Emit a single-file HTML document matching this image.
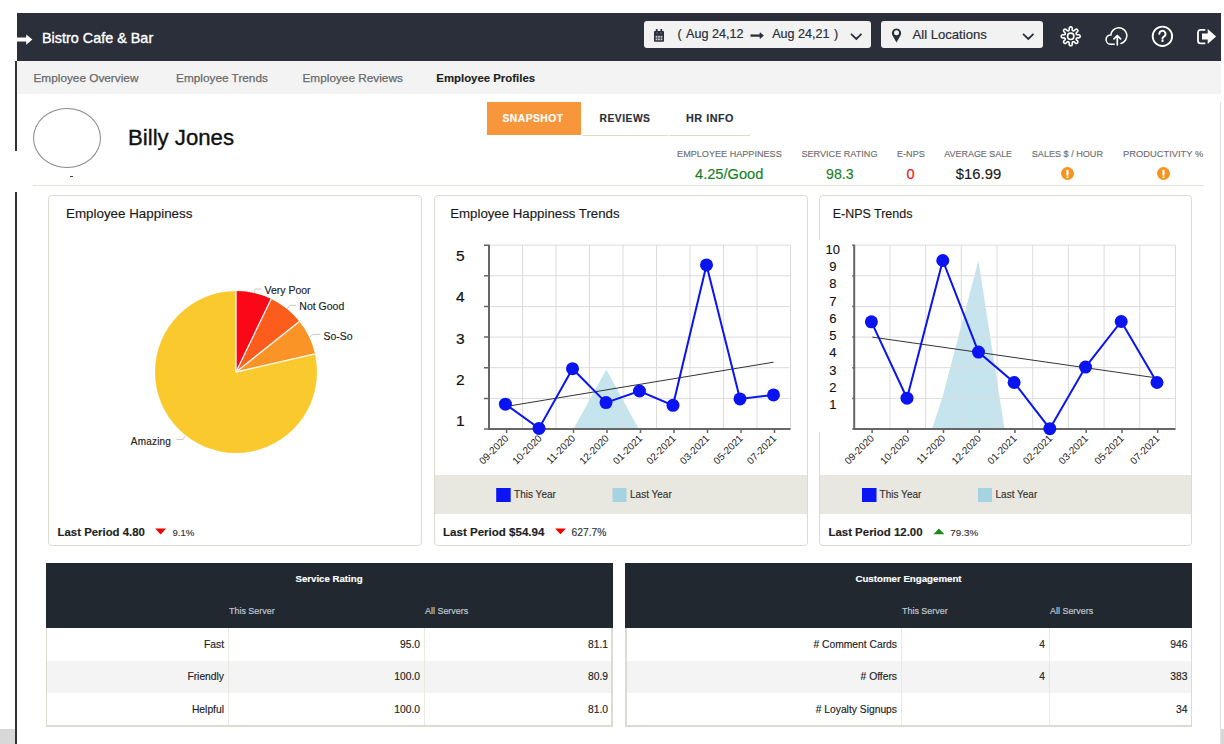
<!DOCTYPE html>
<html><head><meta charset="utf-8"><style>
html,body{margin:0;padding:0;background:#fff;width:1224px;height:744px;overflow:hidden;position:relative;}
.t{position:absolute;white-space:nowrap;line-height:1;-webkit-text-stroke:0.15px currentColor;}
</style></head><body>
<div style="position:absolute;left:17px;top:13px;width:1204px;height:48px;background:#2a2f39;"></div>
<svg style="position:absolute;left:0;top:0" width="40" height="60"><path d="M17 37.6H26.2V34.4L32.4 39.6L26.2 44.8V41.6H17Z" fill="#fff"/></svg>
<div class="t" style="top:30.81px;font-size:14.4px;font-weight:normal;color:#fff;font-family:'Liberation Sans', sans-serif;left:42px;-webkit-text-stroke:0.35px #fff;">Bistro Cafe &amp; Bar</div>
<div style="position:absolute;left:644px;top:21px;width:227px;height:27px;background:#f2f2f2;border-radius:3px;"></div>
<div style="position:absolute;left:881px;top:21px;width:162px;height:27px;background:#f2f2f2;border-radius:3px;"></div>
<svg style="position:absolute;left:0;top:0" width="1224" height="60"><rect x="654" y="31" width="10" height="10.8" rx="0.8" fill="#2a2f39"/><rect x="655.8" y="29" width="1.8" height="3.5" fill="#2a2f39"/><rect x="660.4" y="29" width="1.8" height="3.5" fill="#2a2f39"/><rect x="656.6" y="32.2" width="0.8" height="1.6" fill="#8a8f99"/><rect x="660.6" y="32.2" width="0.8" height="1.6" fill="#8a8f99"/><g fill="#c8cacc"><rect x="655.6" y="35.8" width="1.8" height="1.9"/><rect x="658.1" y="35.8" width="1.8" height="1.9"/><rect x="660.6" y="35.8" width="1.8" height="1.9"/><rect x="655.6" y="38.4" width="1.8" height="1.9"/><rect x="658.1" y="38.4" width="1.8" height="1.9"/><rect x="660.6" y="38.4" width="1.8" height="1.9"/></g><path d="M750.5 35.6h10.5" stroke="#2a2f39" stroke-width="2.3"/><path d="M760 32.8l3.4 2.8-3.4 2.8z" fill="#2a2f39" stroke="#2a2f39" stroke-width="0.8" stroke-linejoin="round"/><path d="M851 33.9l5.3 5.1 5.2-5.1M1023 33.9l5.3 5.1 5.2-5.1" fill="none" stroke="#2a2f39" stroke-width="1.8"/><path d="M896.5 42.5L892.4 35.2A4.6 4.6 0 1 1 900.6 35.2Z" fill="#2a2f39"/><circle cx="896.5" cy="32.8" r="2.5" fill="#f2f2f2"/></svg>
<div class="t" style="top:28.33px;font-size:12.6px;font-weight:normal;color:#2a2f39;font-family:'Liberation Sans', sans-serif;left:677.6px;-webkit-text-stroke:0.2px #2a2f39;">(</div>
<div class="t" style="top:28.33px;font-size:12.6px;font-weight:normal;color:#2a2f39;font-family:'Liberation Sans', sans-serif;left:686px;-webkit-text-stroke:0.2px #2a2f39;">Aug 24,12</div>
<div class="t" style="top:28.33px;font-size:12.6px;font-weight:normal;color:#2a2f39;font-family:'Liberation Sans', sans-serif;left:772.2px;-webkit-text-stroke:0.2px #2a2f39;">Aug 24,21</div>
<div class="t" style="top:28.33px;font-size:12.6px;font-weight:normal;color:#2a2f39;font-family:'Liberation Sans', sans-serif;left:834px;-webkit-text-stroke:0.2px #2a2f39;">)</div>
<div class="t" style="top:28.01px;font-size:13.1px;font-weight:normal;color:#2a2f39;font-family:'Liberation Sans', sans-serif;left:912.5px;-webkit-text-stroke:0.2px #2a2f39;">All Locations</div>
<svg style="position:absolute;left:0;top:0" width="1224" height="70"><path d="M1070.70 26.85 L1071.00 26.88 L1071.29 26.96 L1071.57 27.10 L1071.84 27.31 L1072.08 27.61 L1072.25 28.17 L1072.18 29.66 L1072.31 30.05 L1072.44 30.31 L1072.58 30.51 L1072.73 30.65 L1072.89 30.76 L1073.07 30.83 L1073.25 30.87 L1073.47 30.87 L1073.71 30.83 L1073.99 30.74 L1074.35 30.55 L1075.35 29.45 L1075.87 29.19 L1076.26 29.14 L1076.59 29.18 L1076.89 29.28 L1077.15 29.43 L1077.38 29.62 L1077.57 29.85 L1077.72 30.11 L1077.82 30.41 L1077.86 30.74 L1077.81 31.13 L1077.55 31.65 L1076.45 32.65 L1076.26 33.01 L1076.17 33.29 L1076.13 33.53 L1076.13 33.75 L1076.17 33.93 L1076.24 34.11 L1076.35 34.27 L1076.49 34.42 L1076.69 34.56 L1076.95 34.69 L1077.34 34.82 L1078.83 34.75 L1079.39 34.92 L1079.69 35.16 L1079.90 35.43 L1080.04 35.71 L1080.12 36.00 L1080.15 36.30 L1080.12 36.60 L1080.04 36.89 L1079.90 37.17 L1079.69 37.44 L1079.39 37.68 L1078.83 37.85 L1077.34 37.78 L1076.95 37.91 L1076.69 38.04 L1076.49 38.18 L1076.35 38.33 L1076.24 38.49 L1076.17 38.67 L1076.13 38.85 L1076.13 39.07 L1076.17 39.31 L1076.26 39.59 L1076.45 39.95 L1077.55 40.95 L1077.81 41.47 L1077.86 41.86 L1077.82 42.19 L1077.72 42.49 L1077.57 42.75 L1077.38 42.98 L1077.15 43.17 L1076.89 43.32 L1076.59 43.42 L1076.26 43.46 L1075.87 43.41 L1075.35 43.15 L1074.35 42.05 L1073.99 41.86 L1073.71 41.77 L1073.47 41.73 L1073.25 41.73 L1073.07 41.77 L1072.89 41.84 L1072.73 41.95 L1072.58 42.09 L1072.44 42.29 L1072.31 42.55 L1072.18 42.94 L1072.25 44.43 L1072.08 44.99 L1071.84 45.29 L1071.57 45.50 L1071.29 45.64 L1071.00 45.72 L1070.70 45.75 L1070.40 45.72 L1070.11 45.64 L1069.83 45.50 L1069.56 45.29 L1069.32 44.99 L1069.15 44.43 L1069.22 42.94 L1069.09 42.55 L1068.96 42.29 L1068.82 42.09 L1068.67 41.95 L1068.51 41.84 L1068.33 41.77 L1068.15 41.73 L1067.93 41.73 L1067.69 41.77 L1067.41 41.86 L1067.05 42.05 L1066.05 43.15 L1065.53 43.41 L1065.14 43.46 L1064.81 43.42 L1064.51 43.32 L1064.25 43.17 L1064.02 42.98 L1063.83 42.75 L1063.68 42.49 L1063.58 42.19 L1063.54 41.86 L1063.59 41.47 L1063.85 40.95 L1064.95 39.95 L1065.14 39.59 L1065.23 39.31 L1065.27 39.07 L1065.27 38.85 L1065.23 38.67 L1065.16 38.49 L1065.05 38.33 L1064.91 38.18 L1064.71 38.04 L1064.45 37.91 L1064.06 37.78 L1062.57 37.85 L1062.01 37.68 L1061.71 37.44 L1061.50 37.17 L1061.36 36.89 L1061.28 36.60 L1061.25 36.30 L1061.28 36.00 L1061.36 35.71 L1061.50 35.43 L1061.71 35.16 L1062.01 34.92 L1062.57 34.75 L1064.06 34.82 L1064.45 34.69 L1064.71 34.56 L1064.91 34.42 L1065.05 34.27 L1065.16 34.11 L1065.23 33.93 L1065.27 33.75 L1065.27 33.53 L1065.23 33.29 L1065.14 33.01 L1064.95 32.65 L1063.85 31.65 L1063.59 31.13 L1063.54 30.74 L1063.58 30.41 L1063.68 30.11 L1063.83 29.85 L1064.02 29.62 L1064.25 29.43 L1064.51 29.28 L1064.81 29.18 L1065.14 29.14 L1065.53 29.19 L1066.05 29.45 L1067.05 30.55 L1067.41 30.74 L1067.69 30.83 L1067.93 30.87 L1068.15 30.87 L1068.33 30.83 L1068.51 30.76 L1068.67 30.65 L1068.82 30.51 L1068.96 30.31 L1069.09 30.05 L1069.22 29.66 L1069.15 28.17 L1069.32 27.61 L1069.56 27.31 L1069.83 27.10 L1070.11 26.96 L1070.40 26.88Z" fill="none" stroke="#fff" stroke-width="1.6" stroke-linejoin="round"/><circle cx="1070.7" cy="36.3" r="3.2" fill="none" stroke="#fff" stroke-width="1.6"/><path d="M1114.2 44.2H1110.5A4.6 4.6 0 0 1 1110.9 35A8 8 0 1 1 1121 43.4" fill="none" stroke="#fff" stroke-width="1.6" stroke-linecap="round"/><path d="M1117.3 44.8V35.8M1114 38.9L1117.3 35.5L1120.6 38.9" fill="none" stroke="#fff" stroke-width="1.7" stroke-linecap="round" stroke-linejoin="round"/><circle cx="1162.4" cy="36.3" r="9.7" fill="none" stroke="#fff" stroke-width="1.9"/><path d="M1159.3 33.9A3.1 3.1 0 1 1 1163.9 36.6C1163 37.1 1162.5 37.6 1162.5 38.6V38.9" fill="none" stroke="#fff" stroke-width="1.9" stroke-linecap="round"/><rect x="1161.5" y="40" width="2" height="1.9" fill="#fff"/><path d="M1205.3 29.8H1200.6A2.6 2.6 0 0 0 1198 32.4V40.8A2.6 2.6 0 0 0 1200.6 43.4H1205.3" fill="none" stroke="#fff" stroke-width="1.8"/><path d="M1202 33.5H1207.7V29.1L1216.1 36.6L1207.7 44.1V39.6H1202Z" fill="#fff"/></svg>
<div style="position:absolute;left:17px;top:61px;width:1204px;height:33px;background:#f3f3f3;"></div>
<div class="t" style="top:72.51px;font-size:11.8px;font-weight:normal;color:#6a6a6a;font-family:'Liberation Sans', sans-serif;left:33.5px;-webkit-text-stroke:0.25px #6a6a6a;">Employee Overview</div>
<div class="t" style="top:72.51px;font-size:11.8px;font-weight:normal;color:#6a6a6a;font-family:'Liberation Sans', sans-serif;left:176.1px;-webkit-text-stroke:0.25px #6a6a6a;">Employee Trends</div>
<div class="t" style="top:72.51px;font-size:11.8px;font-weight:normal;color:#6a6a6a;font-family:'Liberation Sans', sans-serif;left:302.5px;-webkit-text-stroke:0.25px #6a6a6a;">Employee Reviews</div>
<div class="t" style="top:72.85px;font-size:11.4px;font-weight:bold;color:#1e1e1e;font-family:'Liberation Sans', sans-serif;left:436.3px;">Employee Profiles</div>
<div style="position:absolute;left:15px;top:61px;width:2px;height:90px;background:#333;"></div>
<div style="position:absolute;left:15px;top:192px;width:2px;height:552px;background:#333;"></div>
<div style="position:absolute;left:1220px;top:102px;width:1px;height:642px;background:#e2e2e2;"></div>
<div style="position:absolute;left:0px;top:729px;width:15px;height:15px;background:#d8d8d8;"></div>
<div style="position:absolute;left:1221px;top:729px;width:3px;height:15px;background:#d8d8d8;"></div>
<div style="position:absolute;left:33px;top:108px;width:66px;height:58px;border:1px solid #8a8a8a;border-radius:50%;"></div>
<div style="position:absolute;left:70px;top:176px;width:3px;height:1px;background:#444;"></div>
<div class="t" style="top:127.21px;font-size:22.2px;font-weight:normal;color:#111;font-family:'Liberation Sans', sans-serif;left:128px;-webkit-text-stroke:0.35px #111;">Billy Jones</div>
<div style="position:absolute;left:487px;top:102px;width:94px;height:33px;background:#f7963a;"></div>
<div class="t" style="top:113.68px;font-size:10.3px;font-weight:bold;color:#fff;font-family:'Liberation Sans', sans-serif;left:233px;width:600px;text-align:center;letter-spacing:0.5px;">SNAPSHOT</div>
<div class="t" style="top:113.68px;font-size:10.3px;font-weight:bold;color:#2a2f38;font-family:'Liberation Sans', sans-serif;left:325px;width:600px;text-align:center;letter-spacing:0.5px;">REVIEWS</div>
<div class="t" style="top:113.26px;font-size:10.8px;font-weight:bold;color:#2a2f38;font-family:'Liberation Sans', sans-serif;left:410px;width:600px;text-align:center;letter-spacing:0.5px;">HR INFO</div>
<div style="position:absolute;left:583px;top:135px;width:85px;height:1px;background:#dcdcd2;"></div>
<div style="position:absolute;left:669px;top:135px;width:81px;height:1px;background:#dcdcd2;"></div>
<div class="t" style="top:149.89px;font-size:9.11px;font-weight:normal;color:#6f6f6f;font-family:'Liberation Sans', sans-serif;left:429.4px;width:600px;text-align:center;">EMPLOYEE HAPPINESS</div>
<div class="t" style="top:149.88px;font-size:9.12px;font-weight:normal;color:#6f6f6f;font-family:'Liberation Sans', sans-serif;left:539.5px;width:600px;text-align:center;">SERVICE RATING</div>
<div class="t" style="top:149.93px;font-size:9.06px;font-weight:normal;color:#6f6f6f;font-family:'Liberation Sans', sans-serif;left:610.9px;width:600px;text-align:center;">E-NPS</div>
<div class="t" style="top:150.03px;font-size:8.94px;font-weight:normal;color:#6f6f6f;font-family:'Liberation Sans', sans-serif;left:678.2px;width:600px;text-align:center;">AVERAGE SALE</div>
<div class="t" style="top:149.91px;font-size:9.09px;font-weight:normal;color:#6f6f6f;font-family:'Liberation Sans', sans-serif;left:767.4000000000001px;width:600px;text-align:center;">SALES $ / HOUR</div>
<div class="t" style="top:149.69px;font-size:9.34px;font-weight:normal;color:#6f6f6f;font-family:'Liberation Sans', sans-serif;left:863.2px;width:600px;text-align:center;">PRODUCTIVITY %</div>
<div class="t" style="top:166.80px;font-size:14.65px;font-weight:normal;color:#17801f;font-family:'Liberation Sans', sans-serif;left:429.20000000000005px;width:600px;text-align:center;">4.25/Good</div>
<div class="t" style="top:167.20px;font-size:14.18px;font-weight:normal;color:#17801f;font-family:'Liberation Sans', sans-serif;left:539.8px;width:600px;text-align:center;">98.3</div>
<div class="t" style="top:166.93px;font-size:14.5px;font-weight:normal;color:#ee1111;font-family:'Liberation Sans', sans-serif;left:610.5px;width:600px;text-align:center;">0</div>
<div class="t" style="top:166.66px;font-size:14.81px;font-weight:normal;color:#1a1a1a;font-family:'Liberation Sans', sans-serif;left:678.5px;width:600px;text-align:center;">$16.99</div>
<svg style="position:absolute;left:1060.0px;top:166.2px" width="15" height="15" viewBox="0 0 15 15"><circle cx="7.5" cy="7.5" r="6.5" fill="#f7941d"/><rect x="6.4" y="3.8" width="2.2" height="6" rx="0.8" fill="#fff"/><rect x="6.5" y="10.6" width="2" height="1.4" fill="#fff"/></svg>
<svg style="position:absolute;left:1155.5px;top:166.2px" width="15" height="15" viewBox="0 0 15 15"><circle cx="7.5" cy="7.5" r="6.5" fill="#f7941d"/><rect x="6.4" y="3.8" width="2.2" height="6" rx="0.8" fill="#fff"/><rect x="6.5" y="10.6" width="2" height="1.4" fill="#fff"/></svg>
<div style="position:absolute;left:33px;top:184.5px;width:1171px;height:1px;background:#e4e4dc;"></div>
<div style="position:absolute;left:48px;top:195px;width:372px;height:349px;border:1px solid #dcdbd0;border-radius:4px;background:#fff;"></div>
<div style="position:absolute;left:434px;top:195px;width:372px;height:349px;border:1px solid #dcdbd0;border-radius:4px;background:#fff;"></div>
<div style="position:absolute;left:819px;top:195px;width:371px;height:349px;border:1px solid #dcdbd0;border-radius:4px;background:#fff;"></div>
<div class="t" style="top:206.97px;font-size:13.38px;font-weight:normal;color:#1a1a1a;font-family:'Liberation Sans', sans-serif;left:66px;">Employee Happiness</div>
<div class="t" style="top:207.08px;font-size:13.26px;font-weight:normal;color:#1a1a1a;font-family:'Liberation Sans', sans-serif;left:450.2px;">Employee Happiness Trends</div>
<div class="t" style="top:207.74px;font-size:12.47px;font-weight:normal;color:#1a1a1a;font-family:'Liberation Sans', sans-serif;left:832.7px;">E-NPS Trends</div>
<div style="position:absolute;left:435px;top:475px;width:372px;height:38.5px;background:#e8e7e0;"></div>
<div style="position:absolute;left:820px;top:475px;width:371px;height:38.5px;background:#e8e7e0;"></div>
<div class="t" style="top:526.67px;font-size:11.38px;font-weight:bold;color:#222;font-family:'Liberation Sans', sans-serif;left:57.6px;">Last Period 4.80</div>
<div class="t" style="top:528.13px;font-size:9.65px;font-weight:normal;color:#333;font-family:'Liberation Sans', sans-serif;left:172.4px;">9.1%</div>
<div class="t" style="top:526.51px;font-size:11.56px;font-weight:bold;color:#222;font-family:'Liberation Sans', sans-serif;left:443px;">Last Period $54.94</div>
<div class="t" style="top:527.61px;font-size:10.26px;font-weight:normal;color:#333;font-family:'Liberation Sans', sans-serif;left:571.6px;">627.7%</div>
<div class="t" style="top:526.60px;font-size:11.46px;font-weight:bold;color:#222;font-family:'Liberation Sans', sans-serif;left:828.4px;">Last Period 12.00</div>
<div class="t" style="top:527.95px;font-size:9.87px;font-weight:normal;color:#333;font-family:'Liberation Sans', sans-serif;left:950.3px;">79.3%</div>
<div style="position:absolute;left:814px;top:240px;width:38px;height:192px;background:#fff;"></div>
<svg style="position:absolute;left:0;top:0" width="1224" height="744"><path d="M155.2 528.6h10.9l-5.45 5.8z" fill="#ee0000"/><path d="M555.1 528.4h10.8l-5.4 5.9z" fill="#ee0000"/><path d="M933.5 534.3h10.8l-5.4-5.9z" fill="#1a8a1a"/><circle cx="236" cy="372" r="81" fill="#f9c92e"/><path d="M236 372L236.00 291.00A81 81 0 0 1 271.14 299.02Z" fill="#fb0717"/><path d="M236 372L271.14 299.02A81 81 0 0 1 299.33 321.50Z" fill="#fc5c1c"/><path d="M236 372L299.33 321.50A81 81 0 0 1 314.97 353.98Z" fill="#fb9426"/><path d="M236 372L236.00 291.00" stroke="#fff" stroke-width="1.3"/><path d="M236 372L271.14 299.02" stroke="#fff" stroke-width="1.3"/><path d="M236 372L299.33 321.50" stroke="#fff" stroke-width="1.3"/><path d="M236 372L314.97 353.98" stroke="#fff" stroke-width="1.3"/><path d="M254.2 292.5L255.2 289H261.5M286.9 309L290 305.3H296M309.6 337.3L313 334.4H320.4M185 436.3L183.1 439.4H176.5" fill="none" stroke="#c8c8c8" stroke-width="1"/><rect x="489" y="245.2" width="301.5" height="183.8" fill="#fff"/><path d="M573.5 429L606.3 369.4L638.8 429Z" fill="#add8e6" fill-opacity="0.7"/><path d="M522.5 245.2V429.0 M556.0 245.2V429.0 M589.5 245.2V429.0 M623.0 245.2V429.0 M656.5 245.2V429.0 M690.0 245.2V429.0 M723.5 245.2V429.0 M757.0 245.2V429.0 M790.5 245.2V429.0 M489 245.2H790.5 M489 275.8H790.5 M489 306.5H790.5 M489 337.1H790.5 M489 367.7H790.5 M489 398.4H790.5" stroke="#dcdcdc" stroke-width="1" fill="none"/><path d="M489 244.7V429.0H790.5" stroke="#666" stroke-width="2" fill="none"/><path d="M484 245.2H489 M484 275.8H489 M484 306.5H489 M484 337.1H489 M484 367.7H489 M484 398.4H489 M484 429.0H489 M506.6 429.0V433.0 M540.0 429.0V433.0 M573.5 429.0V433.0 M607.0 429.0V433.0 M640.5 429.0V433.0 M674.0 429.0V433.0 M707.5 429.0V433.0 M741.0 429.0V433.0 M774.5 429.0V433.0" stroke="#666" stroke-width="1.5" fill="none"/><path d="M507.2 406.3L773.6 362.2" stroke="#333" stroke-width="1" fill="none"/><path d="M505.4 404.2 L539.0 428.4 L572.5 368.7 L606.0 402.6 L639.5 391.0 L673.0 405.3 L706.5 264.9 L740.0 398.9 L773.5 394.9" stroke="#0a14f0" stroke-width="2" fill="none"/><circle cx="505.4" cy="404.2" r="6.5" fill="#0a14f0"/><circle cx="539.0" cy="428.4" r="6.5" fill="#0a14f0"/><circle cx="572.5" cy="368.7" r="6.5" fill="#0a14f0"/><circle cx="606.0" cy="402.6" r="6.5" fill="#0a14f0"/><circle cx="639.5" cy="391.0" r="6.5" fill="#0a14f0"/><circle cx="673.0" cy="405.3" r="6.5" fill="#0a14f0"/><circle cx="706.5" cy="264.9" r="6.5" fill="#0a14f0"/><circle cx="740.0" cy="398.9" r="6.5" fill="#0a14f0"/><circle cx="773.5" cy="394.9" r="6.5" fill="#0a14f0"/><text x="0" y="0" transform="translate(509.1 439.0) rotate(-45)" text-anchor="end" font-family="Liberation Sans" font-size="10" fill="#222">09-2020</text><text x="0" y="0" transform="translate(542.5 439.0) rotate(-45)" text-anchor="end" font-family="Liberation Sans" font-size="10" fill="#222">10-2020</text><text x="0" y="0" transform="translate(576.0 439.0) rotate(-45)" text-anchor="end" font-family="Liberation Sans" font-size="10" fill="#222">11-2020</text><text x="0" y="0" transform="translate(609.5 439.0) rotate(-45)" text-anchor="end" font-family="Liberation Sans" font-size="10" fill="#222">12-2020</text><text x="0" y="0" transform="translate(643.0 439.0) rotate(-45)" text-anchor="end" font-family="Liberation Sans" font-size="10" fill="#222">01-2021</text><text x="0" y="0" transform="translate(676.5 439.0) rotate(-45)" text-anchor="end" font-family="Liberation Sans" font-size="10" fill="#222">02-2021</text><text x="0" y="0" transform="translate(710.0 439.0) rotate(-45)" text-anchor="end" font-family="Liberation Sans" font-size="10" fill="#222">03-2021</text><text x="0" y="0" transform="translate(743.5 439.0) rotate(-45)" text-anchor="end" font-family="Liberation Sans" font-size="10" fill="#222">05-2021</text><text x="0" y="0" transform="translate(777.0 439.0) rotate(-45)" text-anchor="end" font-family="Liberation Sans" font-size="10" fill="#222">07-2021</text><rect x="854.2" y="245.2" width="321.29999999999995" height="183.8" fill="#fff"/><path d="M932 429L942.3 397.7L978.4 260.6L1004.5 429Z" fill="#add8e6" fill-opacity="0.7"/><path d="M889.9 245.2V429.0 M925.6 245.2V429.0 M961.3 245.2V429.0 M997.0 245.2V429.0 M1032.7 245.2V429.0 M1068.4 245.2V429.0 M1104.1 245.2V429.0 M1139.8 245.2V429.0 M1175.5 245.2V429.0 M854.2 245.2H1175.5 M854.2 275.8H1175.5 M854.2 306.5H1175.5 M854.2 337.1H1175.5 M854.2 367.7H1175.5 M854.2 398.4H1175.5" stroke="#dcdcdc" stroke-width="1" fill="none"/><path d="M854.2 244.7V429.0H1175.5" stroke="#666" stroke-width="2" fill="none"/><path d="M852.2 245.2H854.2 M852.2 275.8H854.2 M852.2 306.5H854.2 M852.2 337.1H854.2 M852.2 367.7H854.2 M852.2 398.4H854.2 M852.2 429.0H854.2 M872.1 429.0V433.0 M907.8 429.0V433.0 M943.5 429.0V433.0 M979.2 429.0V433.0 M1014.9 429.0V433.0 M1050.5 429.0V433.0 M1086.2 429.0V433.0 M1122.0 429.0V433.0 M1157.7 429.0V433.0" stroke="#666" stroke-width="1.5" fill="none"/><path d="M872.3 337.1L1155 377.7" stroke="#333" stroke-width="1" fill="none"/><path d="M871.4 321.8 L907.0 398.2 L942.8 260.5 L978.5 352.1 L1014.1 382.5 L1049.8 428.7 L1085.5 367.1 L1121.2 321.5 L1157.0 382.5" stroke="#0a14f0" stroke-width="2" fill="none"/><circle cx="871.4" cy="321.8" r="6.5" fill="#0a14f0"/><circle cx="907.0" cy="398.2" r="6.5" fill="#0a14f0"/><circle cx="942.8" cy="260.5" r="6.5" fill="#0a14f0"/><circle cx="978.5" cy="352.1" r="6.5" fill="#0a14f0"/><circle cx="1014.1" cy="382.5" r="6.5" fill="#0a14f0"/><circle cx="1049.8" cy="428.7" r="6.5" fill="#0a14f0"/><circle cx="1085.5" cy="367.1" r="6.5" fill="#0a14f0"/><circle cx="1121.2" cy="321.5" r="6.5" fill="#0a14f0"/><circle cx="1157.0" cy="382.5" r="6.5" fill="#0a14f0"/><text x="0" y="0" transform="translate(874.6 439.0) rotate(-45)" text-anchor="end" font-family="Liberation Sans" font-size="10" fill="#222">09-2020</text><text x="0" y="0" transform="translate(910.2 439.0) rotate(-45)" text-anchor="end" font-family="Liberation Sans" font-size="10" fill="#222">10-2020</text><text x="0" y="0" transform="translate(946.0 439.0) rotate(-45)" text-anchor="end" font-family="Liberation Sans" font-size="10" fill="#222">11-2020</text><text x="0" y="0" transform="translate(981.7 439.0) rotate(-45)" text-anchor="end" font-family="Liberation Sans" font-size="10" fill="#222">12-2020</text><text x="0" y="0" transform="translate(1017.4 439.0) rotate(-45)" text-anchor="end" font-family="Liberation Sans" font-size="10" fill="#222">01-2021</text><text x="0" y="0" transform="translate(1053.0 439.0) rotate(-45)" text-anchor="end" font-family="Liberation Sans" font-size="10" fill="#222">02-2021</text><text x="0" y="0" transform="translate(1088.8 439.0) rotate(-45)" text-anchor="end" font-family="Liberation Sans" font-size="10" fill="#222">03-2021</text><text x="0" y="0" transform="translate(1124.5 439.0) rotate(-45)" text-anchor="end" font-family="Liberation Sans" font-size="10" fill="#222">05-2021</text><text x="0" y="0" transform="translate(1160.2 439.0) rotate(-45)" text-anchor="end" font-family="Liberation Sans" font-size="10" fill="#222">07-2021</text><rect x="496.2" y="488" width="14.5" height="14" fill="#0a14f5"/><rect x="612.5" y="488" width="14" height="14" fill="#a6d3e2"/><rect x="862" y="488" width="14.5" height="14" fill="#0a14f5"/><rect x="978" y="488" width="14" height="14" fill="#a6d3e2"/></svg>
<div class="t" style="top:284.81px;font-size:10.5px;font-weight:normal;color:#222;font-family:'Liberation Sans', sans-serif;left:264.5px;">Very Poor</div>
<div class="t" style="top:301.01px;font-size:10.5px;font-weight:normal;color:#222;font-family:'Liberation Sans', sans-serif;left:299.3px;">Not Good</div>
<div class="t" style="top:330.91px;font-size:10.5px;font-weight:normal;color:#222;font-family:'Liberation Sans', sans-serif;left:323.5px;">So-So</div>
<div class="t" style="top:436.54px;font-size:10px;font-weight:normal;color:#222;font-family:'Liberation Sans', sans-serif;left:130.8px;letter-spacing:0.2px;">Amazing</div>
<div class="t" style="top:248.18px;font-size:15.5px;font-weight:normal;color:#111;font-family:'Liberation Sans', sans-serif;left:160.2px;width:600px;text-align:center;-webkit-text-stroke:0.2px #111;">5</div>
<div class="t" style="top:289.38px;font-size:15.5px;font-weight:normal;color:#111;font-family:'Liberation Sans', sans-serif;left:160.2px;width:600px;text-align:center;-webkit-text-stroke:0.2px #111;">4</div>
<div class="t" style="top:330.58px;font-size:15.5px;font-weight:normal;color:#111;font-family:'Liberation Sans', sans-serif;left:160.2px;width:600px;text-align:center;-webkit-text-stroke:0.2px #111;">3</div>
<div class="t" style="top:371.78px;font-size:15.5px;font-weight:normal;color:#111;font-family:'Liberation Sans', sans-serif;left:160.2px;width:600px;text-align:center;-webkit-text-stroke:0.2px #111;">2</div>
<div class="t" style="top:412.98px;font-size:15.5px;font-weight:normal;color:#111;font-family:'Liberation Sans', sans-serif;left:160.2px;width:600px;text-align:center;-webkit-text-stroke:0.2px #111;">1</div>
<div class="t" style="top:243.00px;font-size:13px;font-weight:normal;color:#111;font-family:'Liberation Sans', sans-serif;left:532.8px;width:600px;text-align:center;-webkit-text-stroke:0.12px #111;">10</div>
<div class="t" style="top:260.22px;font-size:13px;font-weight:normal;color:#111;font-family:'Liberation Sans', sans-serif;left:532.8px;width:600px;text-align:center;-webkit-text-stroke:0.12px #111;">9</div>
<div class="t" style="top:277.44px;font-size:13px;font-weight:normal;color:#111;font-family:'Liberation Sans', sans-serif;left:532.8px;width:600px;text-align:center;-webkit-text-stroke:0.12px #111;">8</div>
<div class="t" style="top:294.66px;font-size:13px;font-weight:normal;color:#111;font-family:'Liberation Sans', sans-serif;left:532.8px;width:600px;text-align:center;-webkit-text-stroke:0.12px #111;">7</div>
<div class="t" style="top:311.88px;font-size:13px;font-weight:normal;color:#111;font-family:'Liberation Sans', sans-serif;left:532.8px;width:600px;text-align:center;-webkit-text-stroke:0.12px #111;">6</div>
<div class="t" style="top:329.10px;font-size:13px;font-weight:normal;color:#111;font-family:'Liberation Sans', sans-serif;left:532.8px;width:600px;text-align:center;-webkit-text-stroke:0.12px #111;">5</div>
<div class="t" style="top:346.32px;font-size:13px;font-weight:normal;color:#111;font-family:'Liberation Sans', sans-serif;left:532.8px;width:600px;text-align:center;-webkit-text-stroke:0.12px #111;">4</div>
<div class="t" style="top:363.54px;font-size:13px;font-weight:normal;color:#111;font-family:'Liberation Sans', sans-serif;left:532.8px;width:600px;text-align:center;-webkit-text-stroke:0.12px #111;">3</div>
<div class="t" style="top:380.76px;font-size:13px;font-weight:normal;color:#111;font-family:'Liberation Sans', sans-serif;left:532.8px;width:600px;text-align:center;-webkit-text-stroke:0.12px #111;">2</div>
<div class="t" style="top:397.98px;font-size:13px;font-weight:normal;color:#111;font-family:'Liberation Sans', sans-serif;left:532.8px;width:600px;text-align:center;-webkit-text-stroke:0.12px #111;">1</div>
<div class="t" style="top:490.31px;font-size:10.03px;font-weight:normal;color:#333;font-family:'Liberation Sans', sans-serif;left:514.1px;">This Year</div>
<div class="t" style="top:490.31px;font-size:10.03px;font-weight:normal;color:#333;font-family:'Liberation Sans', sans-serif;left:630px;">Last Year</div>
<div class="t" style="top:490.31px;font-size:10.03px;font-weight:normal;color:#333;font-family:'Liberation Sans', sans-serif;left:879.6px;">This Year</div>
<div class="t" style="top:490.31px;font-size:10.03px;font-weight:normal;color:#333;font-family:'Liberation Sans', sans-serif;left:995.5px;">Last Year</div>
<div style="position:absolute;left:45.5px;top:562.5px;width:567.0px;height:65.5px;background:#212830;"></div>
<div style="position:absolute;left:45.5px;top:628px;width:1.5px;height:98.5px;background:#dcdbd0;"></div>
<div style="position:absolute;left:611.0px;top:628px;width:1.5px;height:98.5px;background:#dcdbd0;"></div>
<div style="position:absolute;left:45.5px;top:725px;width:567.0px;height:2px;background:#dcdbd0;"></div>
<div style="position:absolute;left:47.0px;top:661px;width:564.0px;height:32px;background:#f4f4f4;"></div>
<div style="position:absolute;left:228px;top:628px;width:1px;height:97px;background:#ebe9e1;"></div>
<div style="position:absolute;left:424px;top:628px;width:1px;height:97px;background:#ebe9e1;"></div>
<div class="t" style="top:573.81px;font-size:9.67px;font-weight:bold;color:#fff;font-family:'Liberation Sans', sans-serif;left:29.0px;width:600px;text-align:center;">Service Rating</div>
<div class="t" style="top:607.02px;font-size:8.95px;font-weight:normal;color:#bfc6cd;font-family:'Liberation Sans', sans-serif;left:229px;-webkit-text-stroke:0.2px #bfc6cd;">This Server</div>
<div class="t" style="top:607.02px;font-size:8.95px;font-weight:normal;color:#bfc6cd;font-family:'Liberation Sans', sans-serif;left:425px;-webkit-text-stroke:0.2px #bfc6cd;">All Servers</div>
<div class="t" style="top:639.58px;font-size:10.3px;font-weight:normal;color:#222;font-family:'Liberation Sans', sans-serif;right:1000px;text-align:right;">Fast</div>
<div class="t" style="top:639.58px;font-size:10.3px;font-weight:normal;color:#222;font-family:'Liberation Sans', sans-serif;right:804px;text-align:right;">95.0</div>
<div class="t" style="top:639.58px;font-size:10.3px;font-weight:normal;color:#222;font-family:'Liberation Sans', sans-serif;right:616.0px;text-align:right;">81.1</div>
<div class="t" style="top:672.18px;font-size:10.3px;font-weight:normal;color:#222;font-family:'Liberation Sans', sans-serif;right:1000px;text-align:right;">Friendly</div>
<div class="t" style="top:672.18px;font-size:10.3px;font-weight:normal;color:#222;font-family:'Liberation Sans', sans-serif;right:804px;text-align:right;">100.0</div>
<div class="t" style="top:672.18px;font-size:10.3px;font-weight:normal;color:#222;font-family:'Liberation Sans', sans-serif;right:616.0px;text-align:right;">80.9</div>
<div class="t" style="top:704.78px;font-size:10.3px;font-weight:normal;color:#222;font-family:'Liberation Sans', sans-serif;right:1000px;text-align:right;">Helpful</div>
<div class="t" style="top:704.78px;font-size:10.3px;font-weight:normal;color:#222;font-family:'Liberation Sans', sans-serif;right:804px;text-align:right;">100.0</div>
<div class="t" style="top:704.78px;font-size:10.3px;font-weight:normal;color:#222;font-family:'Liberation Sans', sans-serif;right:616.0px;text-align:right;">81.0</div>
<div style="position:absolute;left:625px;top:562.5px;width:567px;height:65.5px;background:#212830;"></div>
<div style="position:absolute;left:625px;top:628px;width:1.5px;height:98.5px;background:#dcdbd0;"></div>
<div style="position:absolute;left:1190.5px;top:628px;width:1.5px;height:98.5px;background:#dcdbd0;"></div>
<div style="position:absolute;left:625px;top:725px;width:567px;height:2px;background:#dcdbd0;"></div>
<div style="position:absolute;left:626.5px;top:661px;width:564px;height:32px;background:#f4f4f4;"></div>
<div style="position:absolute;left:901px;top:628px;width:1px;height:97px;background:#ebe9e1;"></div>
<div style="position:absolute;left:1049px;top:628px;width:1px;height:97px;background:#ebe9e1;"></div>
<div class="t" style="top:573.78px;font-size:9.71px;font-weight:bold;color:#fff;font-family:'Liberation Sans', sans-serif;left:608.5px;width:600px;text-align:center;">Customer Engagement</div>
<div class="t" style="top:607.02px;font-size:8.95px;font-weight:normal;color:#bfc6cd;font-family:'Liberation Sans', sans-serif;left:902px;-webkit-text-stroke:0.2px #bfc6cd;">This Server</div>
<div class="t" style="top:607.02px;font-size:8.95px;font-weight:normal;color:#bfc6cd;font-family:'Liberation Sans', sans-serif;left:1050px;-webkit-text-stroke:0.2px #bfc6cd;">All Servers</div>
<div class="t" style="top:639.58px;font-size:10.3px;font-weight:normal;color:#222;font-family:'Liberation Sans', sans-serif;right:327px;text-align:right;"># Comment Cards</div>
<div class="t" style="top:639.58px;font-size:10.3px;font-weight:normal;color:#222;font-family:'Liberation Sans', sans-serif;right:179px;text-align:right;">4</div>
<div class="t" style="top:639.58px;font-size:10.3px;font-weight:normal;color:#222;font-family:'Liberation Sans', sans-serif;right:36.5px;text-align:right;">946</div>
<div class="t" style="top:672.18px;font-size:10.3px;font-weight:normal;color:#222;font-family:'Liberation Sans', sans-serif;right:327px;text-align:right;"># Offers</div>
<div class="t" style="top:672.18px;font-size:10.3px;font-weight:normal;color:#222;font-family:'Liberation Sans', sans-serif;right:179px;text-align:right;">4</div>
<div class="t" style="top:672.18px;font-size:10.3px;font-weight:normal;color:#222;font-family:'Liberation Sans', sans-serif;right:36.5px;text-align:right;">383</div>
<div class="t" style="top:704.78px;font-size:10.3px;font-weight:normal;color:#222;font-family:'Liberation Sans', sans-serif;right:327px;text-align:right;"># Loyalty Signups</div>
<div class="t" style="top:704.78px;font-size:10.3px;font-weight:normal;color:#222;font-family:'Liberation Sans', sans-serif;right:179px;text-align:right;"></div>
<div class="t" style="top:704.78px;font-size:10.3px;font-weight:normal;color:#222;font-family:'Liberation Sans', sans-serif;right:36.5px;text-align:right;">34</div>
</body></html>
